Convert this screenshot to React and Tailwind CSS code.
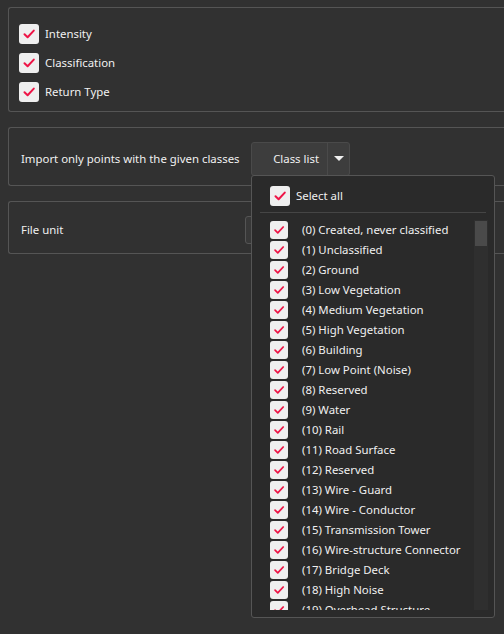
import React from "react";

const F = { fontFamily: '"Noto Sans", "Open Sans", sans-serif' };

function Check({ size = 20 }) {
  return (
    <span
      className="flex shrink-0 items-center justify-center rounded-[3px] bg-[#efefef]"
      style={{ width: size, height: size }}
    >
      <svg width={size - 4} height={size - 4} viewBox="0 0 16 16" fill="none">
        <path d="M3.5 8.2 L6.6 11.2 L12.8 4.6" stroke="#ee1446" strokeWidth="2" strokeLinecap="round" strokeLinejoin="round" />
      </svg>
    </span>
  );
}

const classes = [
  "(0) Created, never classified",
  "(1) Unclassified",
  "(2) Ground",
  "(3) Low Vegetation",
  "(4) Medium Vegetation",
  "(5) High Vegetation",
  "(6) Building",
  "(7) Low Point (Noise)",
  "(8) Reserved",
  "(9) Water",
  "(10) Rail",
  "(11) Road Surface",
  "(12) Reserved",
  "(13) Wire - Guard",
  "(14) Wire - Conductor",
  "(15) Transmission Tower",
  "(16) Wire-structure Connector",
  "(17) Bridge Deck",
  "(18) High Noise",
  "(19) Overhead Structure",
];

export default function App() {
  return (
    <div className="relative h-[634px] w-[504px] overflow-hidden bg-[#313131] text-[11.4px] text-[#f0f0f0]" style={F}>
      <div className="flex flex-col gap-[15px] pl-[8px] pt-[7px]">
        <div className="-mr-[4px] flex h-[105px] flex-col justify-center gap-[9px] rounded-l-[3px] border border-r-0 border-[#555555] pl-[10px] pt-[7px]">
          {["Intensity", "Classification", "Return Type"].map((t) => (
            <div key={t} className="flex items-center gap-[6px]">
              <Check size={20} />
              <span className="whitespace-nowrap">{t}</span>
            </div>
          ))}
        </div>
        <div className="-mr-[4px] flex h-[59px] items-center rounded-l-[3px] border border-r-0 border-[#555555] pl-[12px] pt-[5px]">
          <span className="w-[230px] whitespace-nowrap">Import only points with the given classes</span>
          <div className="flex h-[34px] items-stretch rounded-[3px] border border-[#4a4a4a] bg-[#3d3d3d]">
            <span className="flex w-[75px] items-center justify-end whitespace-nowrap pr-[8px]">Class list</span>
            <span className="flex w-[22px] items-center justify-center border-l border-[#4a4a4a]">
              <svg width="10" height="6" viewBox="0 0 10 6">
                <path d="M0 0 L10 0 L5 5 Z" fill="#f0f0f0" />
              </svg>
            </span>
          </div>
        </div>
        <div className="-mr-[4px] flex h-[53px] items-center rounded-l-[3px] border border-r-0 border-[#555555] pl-[12px] pt-[5px]">
          <span className="w-[224px] whitespace-nowrap">File unit</span>
          <div className="h-[28px] w-[30px] rounded-[3px] border border-[#555555] bg-[#383838]" />
        </div>
      </div>

      <div className="absolute left-[251px] top-[175px] flex h-[443px] w-[244px] flex-col rounded-[3px] border border-[#555555] bg-[#2a2a2a]">
        <div className="flex h-[36px] shrink-0 items-center gap-[6px] pl-[18px] pt-[4px]">
          <Check size={20} />
          <span>Select all</span>
        </div>
        <div className="mx-[8px] h-px shrink-0 bg-[#454545]" />
        <div className="relative mt-[7px] h-[390px] overflow-hidden">
          <div className="flex flex-col">
            {classes.map((c) => (
              <div key={c} className="flex h-[20px] shrink-0 items-center pl-[18px]">
                <Check size={18} />
                <span className="whitespace-nowrap pl-[14px]">{c}</span>
              </div>
            ))}
          </div>
          <div className="absolute right-[6px] top-0 h-[390px] w-[14px] bg-[#2f2f2f]">
            <div className="mx-auto mt-px h-[25px] w-[12px] bg-[#4a4a4a]" />
          </div>
        </div>
      </div>
    </div>
  );
}
